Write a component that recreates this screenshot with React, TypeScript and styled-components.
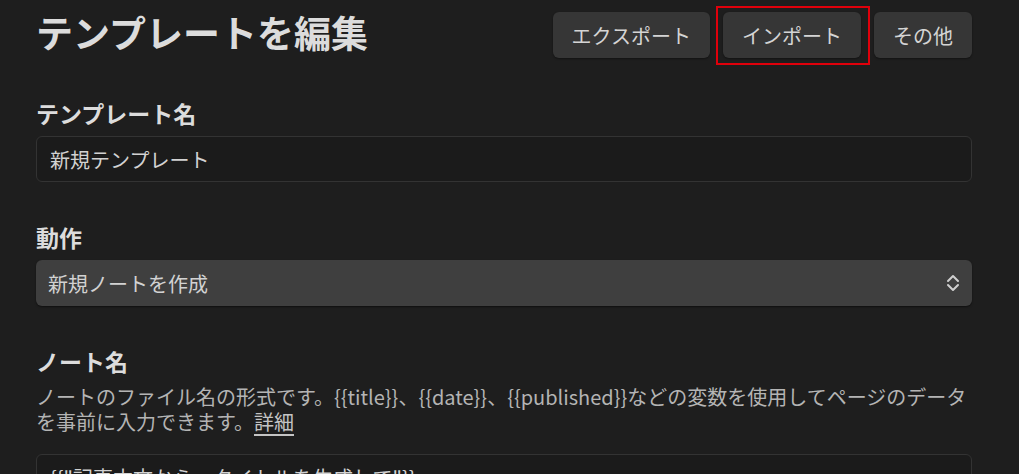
import React from 'react';
import styled, { createGlobalStyle } from 'styled-components';

const GlobalStyle = createGlobalStyle`
  html, body {
    margin: 0;
    background: #1e1e1e;
  }
  body {
    font-family: 'Noto Sans CJK JP', 'Noto Sans', sans-serif;
    color: #dadada;
    overflow: hidden;
  }
`;

const Page = styled.div`
  padding: 12px 47px 0 36px;
`;

const Header = styled.header`
  display: flex;
  justify-content: space-between;
  align-items: center;
  height: 46px;
`;

const Title = styled.h1`
  margin: 0;
  font-size: 37px;
  line-height: 46px;
  font-weight: 700;
  color: #dcdcdc;
  transform: translateY(-3px);
`;

const Actions = styled.div`
  display: flex;
  gap: 13px;
`;

const ActionButton = styled.button<{ $highlight?: boolean }>`
  position: relative;
  height: 46px;
  padding: 0 19px;
  border: none;
  border-radius: 6px;
  background: #363636;
  box-shadow: 0 1px 2px rgba(0, 0, 0, 0.4);
  color: #d4d4d4;
  font-family: inherit;
  font-size: 20px;
  cursor: pointer;

  &::after {
    content: '';
    display: ${(p) => (p.$highlight ? 'block' : 'none')};
    position: absolute;
    left: -7px;
    right: -9px;
    top: -6px;
    bottom: -7px;
    border: 2px solid #e0000b;
  }
`;

const Field = styled.section`
  margin-top: 40px;
`;

const Label = styled.h2`
  margin: 0 0 8px;
  font-size: 23px;
  line-height: 30px;
  font-weight: 700;
  color: #dcdcdc;
`;

const TextInput = styled.div`
  box-sizing: border-box;
  height: 46px;
  display: flex;
  align-items: center;
  padding: 0 13px;
  background: #1b1b1b;
  border: 1px solid #333;
  border-radius: 6px;
  font-size: 20px;
  color: #d2d2d2;
`;

const Select = styled.div`
  box-sizing: border-box;
  height: 46px;
  display: flex;
  align-items: center;
  justify-content: space-between;
  padding: 0 12px;
  background: #3f3f3f;
  border-radius: 6px;
  box-shadow: 0 1px 2px rgba(0, 0, 0, 0.5);
  font-size: 20px;
  color: #d2d2d2;
`;

const Description = styled.p`
  margin: 0 0 20px;
  font-size: 20px;
  line-height: 25px;
  color: #b4b4b4;

  a {
    color: #c4c4c4;
    text-decoration: underline;
    text-underline-offset: 4px;
  }
`;

const Chevrons = () => (
  <svg width="14" height="20" viewBox="0 0 14 20" fill="none" stroke="#cfcfcf" strokeWidth="2" strokeLinecap="round" strokeLinejoin="round">
    <path d="M2 8 7 3 12 8" />
    <path d="M2 12 7 17 12 12" />
  </svg>
);

export default function App() {
  return (
    <Page>
      <GlobalStyle />
      <Header>
        <Title>テンプレートを編集</Title>
        <Actions>
          <ActionButton>エクスポート</ActionButton>
          <ActionButton $highlight>インポート</ActionButton>
          <ActionButton>その他</ActionButton>
        </Actions>
      </Header>

      <Field>
        <Label>テンプレート名</Label>
        <TextInput>新規テンプレート</TextInput>
      </Field>

      <Field>
        <Label>動作</Label>
        <Select>
          <span>新規ノートを作成</span>
          <Chevrons />
        </Select>
      </Field>

      <Field>
        <Label>ノート名</Label>
        <Description>
          ノートのファイル名の形式です。{'{{title}}'}、{'{{date}}'}、{'{{published}}'}などの変数を使用してページのデータを事前に入力できます。<a>詳細</a>
        </Description>
        <TextInput>{'{{"記事本文から、タイトルを生成して"}}'}</TextInput>
      </Field>
    </Page>
  );
}
